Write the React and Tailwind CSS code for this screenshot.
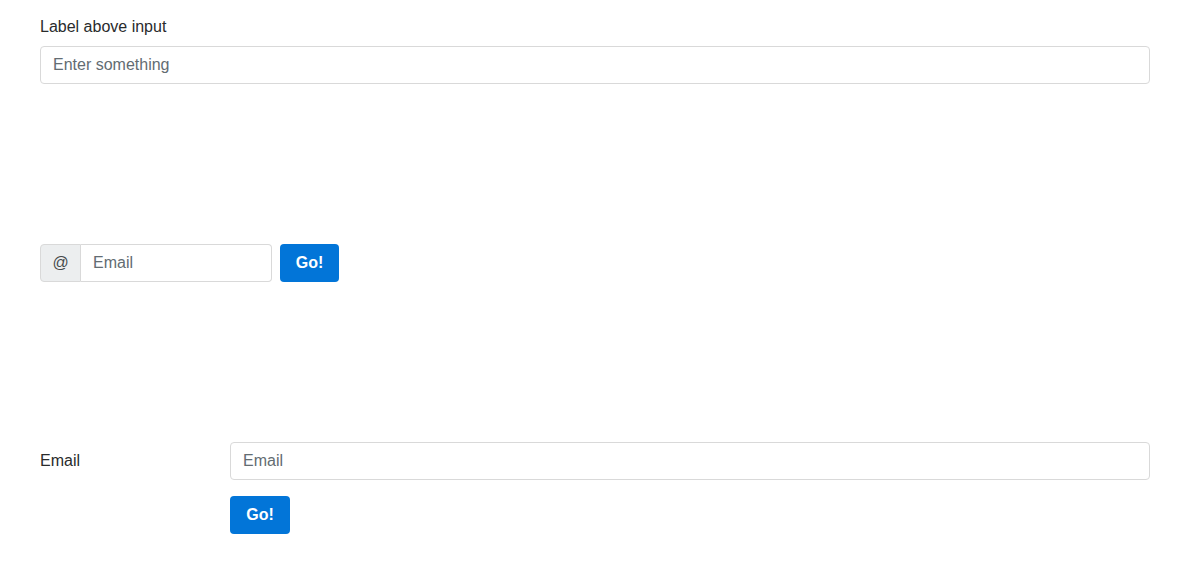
export default function App() {
  const font = { fontFamily: '"Liberation Sans", Arial, sans-serif' }
  return (
    <div className="bg-white min-h-screen px-10 pt-[15px] text-[16px] leading-6 text-[#292b2c]" style={font}>
      <div className="w-[1110px]">
        <label className="block mb-[7px]">Label above input</label>
        <input
          className="block w-full h-[38px] px-3 border border-[#d9d9d9] rounded bg-white placeholder:text-[#636c72] outline-none"
          placeholder="Enter something"
        />
      </div>

      <div className="mt-[160px] flex items-center gap-2">
        <div className="flex h-[38px]">
          <span className="w-[41px] flex items-center justify-center bg-[#eceeef] border border-[#d9d9d9] rounded-l text-[#464a4c]">@</span>
          <input
            className="w-[191px] h-[38px] px-3 border border-l-0 border-[#d9d9d9] rounded-r bg-white placeholder:text-[#636c72] outline-none"
            placeholder="Email"
          />
        </div>
        <button className="w-[59px] h-[38px] rounded bg-[#0275d8] text-white font-bold">Go!</button>
      </div>

      <div className="mt-[160px] w-[1110px]">
        <div className="flex items-center">
          <label className="w-[190px] shrink-0">Email</label>
          <input
            className="flex-1 h-[38px] px-3 border border-[#d9d9d9] rounded bg-white placeholder:text-[#636c72] outline-none"
            placeholder="Email"
          />
        </div>
        <div className="mt-4 pl-[190px]">
          <button className="w-[60px] h-[38px] rounded bg-[#0275d8] text-white font-bold">Go!</button>
        </div>
      </div>
    </div>
  )
}
